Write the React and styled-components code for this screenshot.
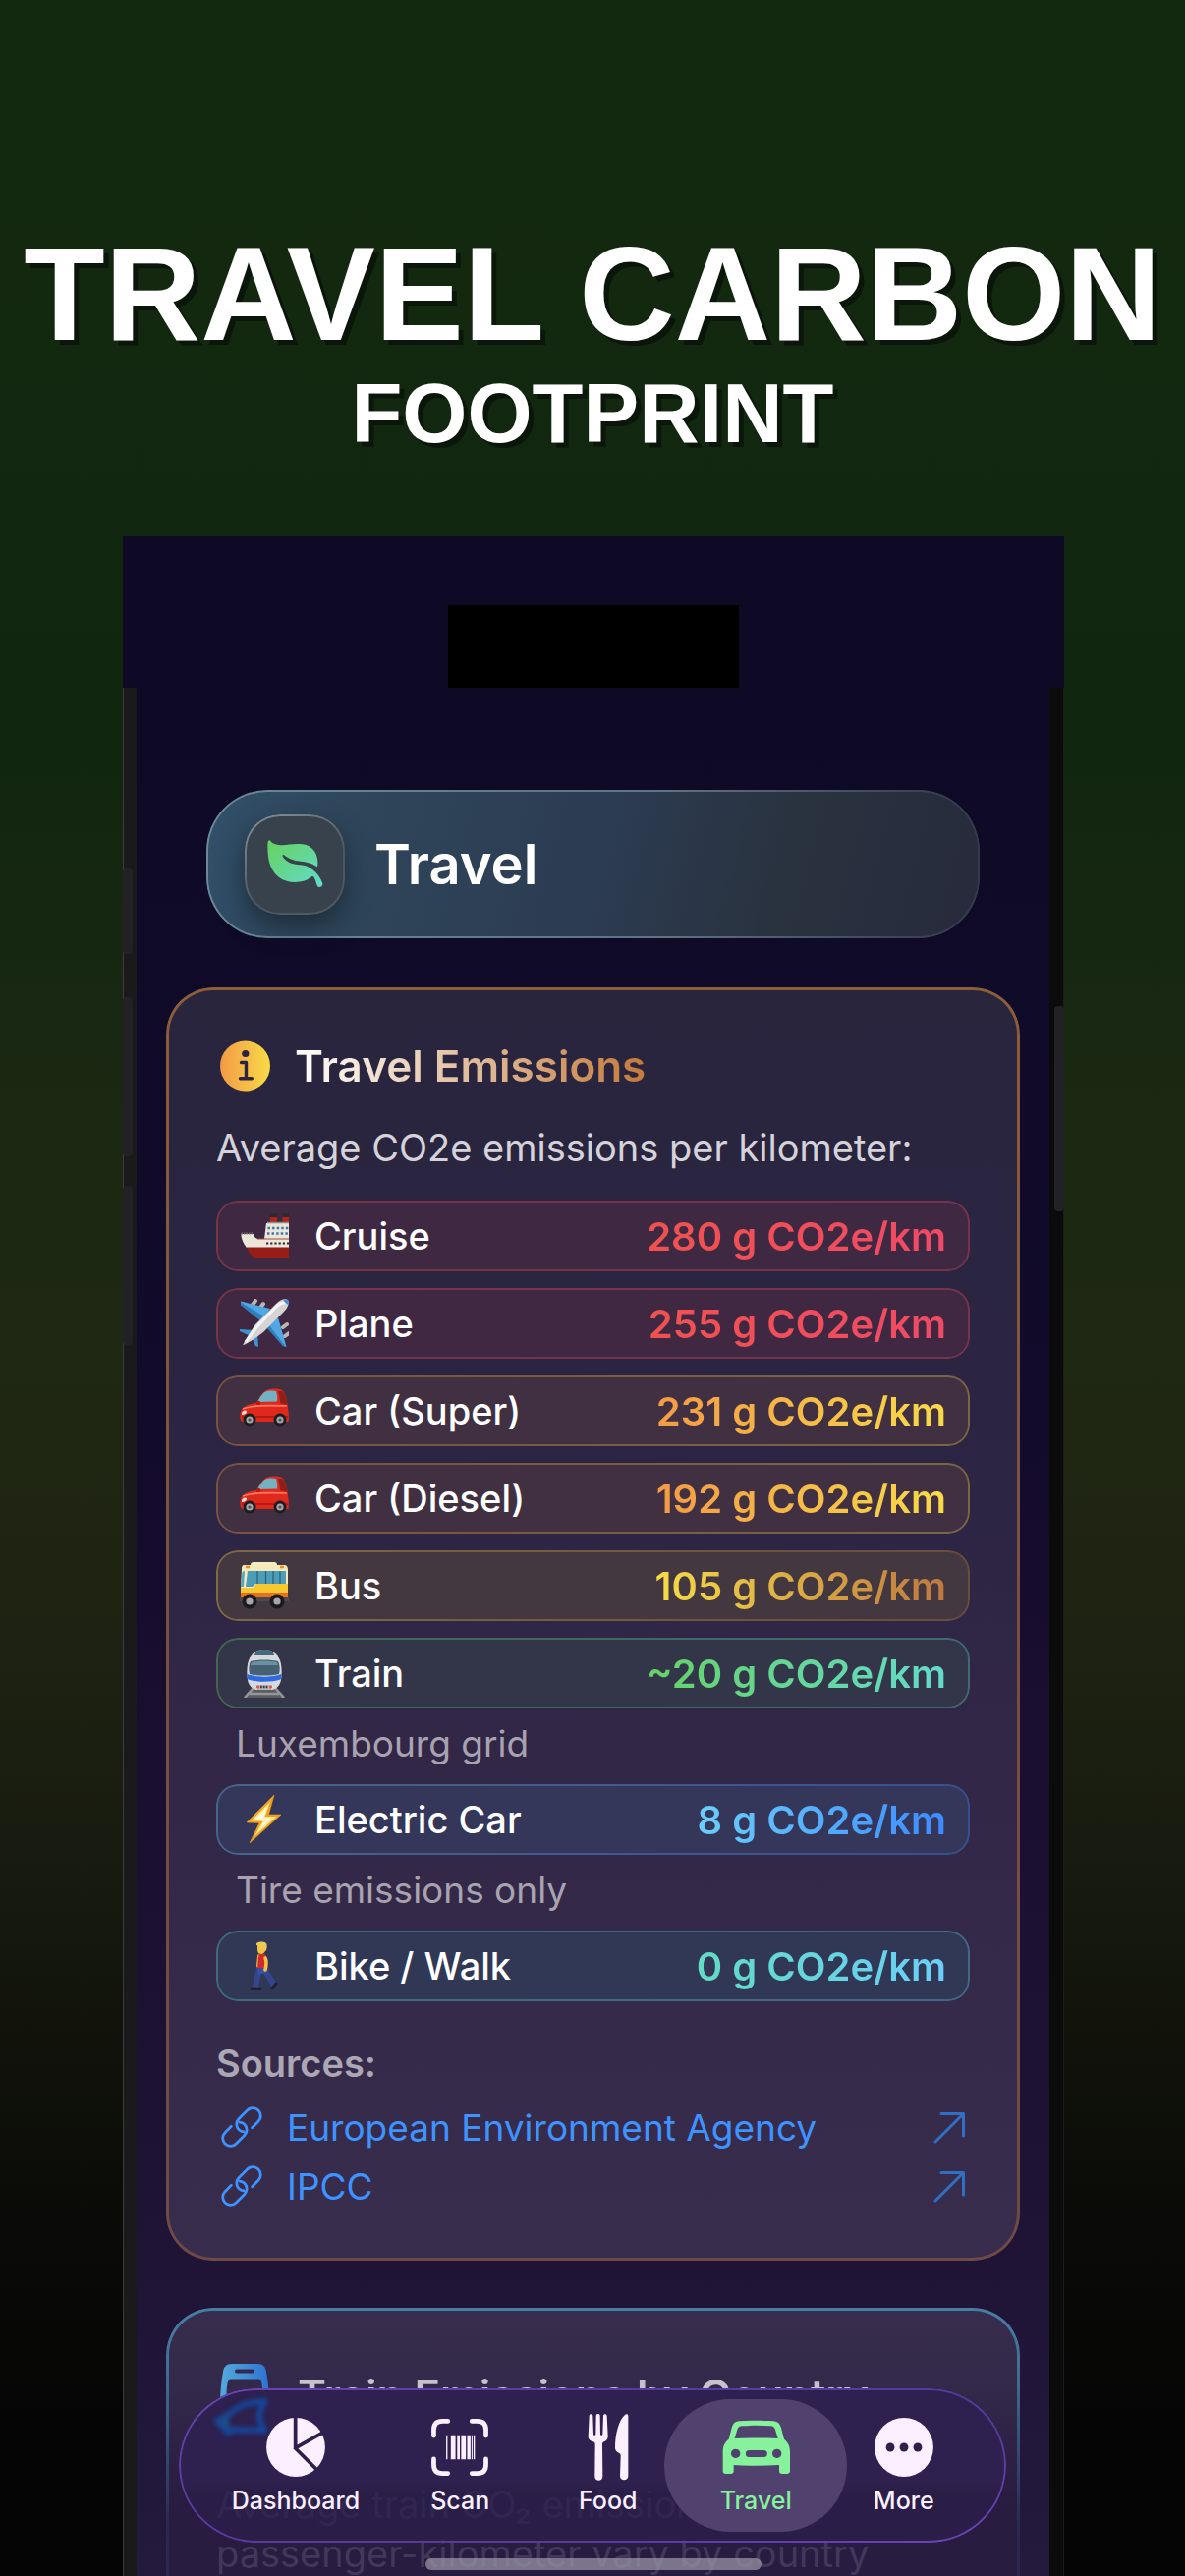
import React, { useState } from "react";
import styled, { createGlobalStyle, css } from "styled-components";

const GlobalStyle = createGlobalStyle`
  * {
    box-sizing: border-box;
  }
  body {
    margin: 0;
    background: #050505;
    font-family: Inter, "Liberation Sans", sans-serif;
    color: #ffffff;
  }
`;

// gradient outline, drawn inside the rounded box
const gradientBorder = (width, gradient) => css`
  position: relative;
  &::before {
    content: "";
    position: absolute;
    inset: 0;
    border-radius: inherit;
    padding: ${width}px;
    background: ${gradient};
    mask: linear-gradient(#000 0 0) content-box exclude, linear-gradient(#000 0 0);
    pointer-events: none;
  }
`;

const gradientText = css`
  background: linear-gradient(90deg, ${(p) => p.$from}, ${(p) => p.$to});
  background-clip: text;
  -webkit-background-clip: text;
  color: transparent;
`;

const Page = styled.main`
  height: 100vh;
  display: flex;
  flex-direction: column;
  overflow: hidden;
  background: linear-gradient(
    180deg,
    #13290f 0%,
    #12270f 20%,
    #10260f 28%,
    #1a2812 42%,
    #1f2812 53%,
    #1e2212 64%,
    #16190e 74%,
    #0b0c08 85%,
    #050505 94%
  );
`;

const Headline = styled.h1`
  margin: 0;
  padding: 226px 0 85px;
  display: flex;
  flex-direction: column;
  align-items: center;
  font-family: "Liberation Sans", Arial, sans-serif;
  font-weight: bold;
  white-space: nowrap;
  text-shadow: 5px 5px 0 #0a160a;
`;

const HeadlineTop = styled.span`
  font-size: 135px;
  line-height: 148px;
`;

const HeadlineBottom = styled.span`
  margin-top: 6px;
  font-size: 85px;
  line-height: 81px;
`;

const Phone = styled.div`
  margin: 0 123px 0 125px;
  flex: 1;
  min-height: 0;
  display: flex;
  flex-direction: column;
`;

const PhoneTop = styled.div`
  height: 154px;
  padding-top: 70px;
  display: flex;
  justify-content: center;
  background: #0e0a25;
`;

const Island = styled.div`
  width: 296px;
  height: 84px;
  background: #000000;
`;

const Bezel = styled.div`
  position: relative;
  flex: 1;
  min-height: 0;
  display: flex;
  padding: 0 14px 0 13px;
  background: linear-gradient(90deg, #1a1a1a, #0b0b0c);
  border-left: 1px solid #3c3c3e;
  border-right: 1px solid #1e1c20;
`;

const SideKey = styled.span`
  position: absolute;
  top: ${(p) => p.$top}px;
  ${(p) => p.$side}: -1px;
  width: 10px;
  height: ${(p) => p.$size}px;
  border-radius: 4px;
  background: #222125;
`;

const Screen = styled.div`
  position: relative;
  flex: 1;
  display: flex;
  flex-direction: column;
  overflow: hidden;
  padding: 104px 30px 0;
  background: linear-gradient(180deg, #0e0a25 0%, #120b2b 38%, #190d30 52%, #1f1436 84%, #241a3e 100%);
`;

const TitleBar = styled.header`
  flex: none;
  height: 151px;
  margin: 0 41px 50px;
  padding: 0 39px;
  display: flex;
  align-items: center;
  gap: 30px;
  border-radius: 62px;
  background: linear-gradient(105deg, #31506a 0%, #2f465b 18%, #2c3c52 50%, #29323f 74%, #272a3c 100%);
  ${gradientBorder(2, "linear-gradient(90deg, #6d8797, #5d7284 60%, #34384b)")}
`;

const LeafBadge = styled.div`
  width: 102px;
  height: 102px;
  display: grid;
  place-items: center;
  border-radius: 36px;
  background: #37424d;
  box-shadow: 0 12px 26px rgba(22, 36, 46, 0.7);
  ${gradientBorder(2, "linear-gradient(150deg, #8a949b, #4c5660 60%, #515b64)")}
`;

const ScreenTitle = styled.h2`
  margin: 0;
  font-size: 56px;
  font-weight: 600;
`;

const Card = styled.section`
  flex: none;
  margin-bottom: 48px;
  padding: 54px 51px 46px;
  border-radius: 48px;
  background: ${(p) => p.$fill};
  ${(p) => gradientBorder(3, p.$edge)}
`;

const CardHead = styled.div`
  display: flex;
  align-items: center;
  gap: 25px;
  padding-left: 4px;
  margin-bottom: 33px;

  svg {
    display: block;
  }
`;

const CardTitle = styled.h3`
  margin: 0;
  font-size: 44px;
  line-height: 52px;
  font-weight: 600;
  ${gradientText}
`;

const Lead = styled.p`
  margin: 0 0 30px;
  font-size: 38px;
  line-height: 48px;
  color: #d5d3d9;
`;

const CountryCard = styled(Card)`
  padding-top: 57px;

  ${CardHead} {
    gap: 29px;
    margin-bottom: 54px;
  }
`;

const Faded = styled(Lead)`
  line-height: 50px;
  color: #43385b;
`;

const EmissionList = styled.ul`
  margin: 0;
  padding: 0;
  list-style: none;
  display: flex;
  flex-direction: column;
  gap: 17px;
`;

const EmissionRow = styled.div`
  height: 72px;
  padding: 0 24px;
  display: flex;
  align-items: center;
  gap: 26px;
  border-radius: 22px;
  font-size: 38px;
  background: ${(p) => p.$fill};
  ${(p) => gradientBorder(2, `linear-gradient(90deg, ${p.$from}50, ${p.$to}50)`)}

  svg {
    flex: none;
    width: 50px;
    height: 50px;
  }
`;

const Mode = styled.span`
  flex: 1;
  font-weight: 500;
`;

const Amount = styled.strong`
  font-size: 40px;
  font-weight: 600;
  ${gradientText}
`;

const Note = styled.p`
  margin: 0;
  padding: 12px 0 0 20px;
  font-size: 37px;
  line-height: 48px;
  color: #a9a3b0;
`;

const SourcesTitle = styled.h4`
  margin: 39px 0 11px;
  font-size: 38px;
  line-height: 48px;
  font-weight: 600;
  color: #aca7b4;
`;

const SourceLink = styled.a`
  height: 60px;
  padding: 0 4px;
  display: flex;
  align-items: center;
  gap: 24px;
  font-size: 37px;
  color: #3e93ff;
  text-decoration: none;

  span {
    flex: 1;
  }
`;

const TabBar = styled.nav`
  position: absolute;
  left: 43px;
  right: 44px;
  bottom: 34px;
  height: 157px;
  padding: 0 29px 0 27px;
  display: grid;
  grid-template-columns: 11fr 9fr 9fr 9fr 9fr;
  border-radius: 79px;
  background: linear-gradient(180deg, #2e214f 0%, #2e214f 58%, rgba(43, 31, 76, 0.7) 68%, rgba(43, 31, 76, 0.75) 100%);

  &::before {
    content: "";
    position: absolute;
    inset: 0;
    border-radius: inherit;
    padding: 2px;
    background: linear-gradient(165deg, #6a45b8 0%, #5a3aa0 30%, #573a9e 70%, #6a45b8 100%);
    mask: linear-gradient(#000 0 0) content-box exclude, linear-gradient(#000 0 0);
    pointer-events: none;
  }
`;

const Tab = styled.button`
  position: relative;
  z-index: 1;
  margin: 11px 0;
  padding: 15px 0 0;
  display: flex;
  flex-direction: column;
  align-items: center;
  gap: 4px;
  border: 0;
  background: none;
  font-family: inherit;
  font-size: 25px;
  line-height: 32px;
  font-weight: 500;
  color: ${(p) => (p.$active ? "#86f29b" : "#faf0ff")};
  cursor: pointer;

  &::before {
    content: "";
    display: ${(p) => (p.$active ? "block" : "none")};
    position: absolute;
    inset: 0 -18px;
    z-index: -1;
    border-radius: 68px;
    background: #50416f;
  }

  svg {
    height: 68px;
  }
`;

const Refraction = styled.svg`
  position: absolute;
  left: 36px;
  top: 10px;
  filter: blur(2px);
`;

const HomeBar = styled.div`
  position: absolute;
  left: 50%;
  bottom: 6px;
  width: 342px;
  height: 12px;
  margin-left: -171px;
  border-radius: 6px;
  background: rgba(160, 154, 170, 0.7);
`;

const LeafIcon = () => (
  <svg width="57" height="49" viewBox="0 0 57 49">
    <defs>
      <linearGradient id="leaf" x1="0" y1="0" x2="1" y2="1">
        <stop offset="0" stopColor="#66d25f" />
        <stop offset="1" stopColor="#63dbcb" />
      </linearGradient>
    </defs>
    <path
      fill="url(#leaf)"
      d="M3 .7C5 3 8 5 14 5.2 20 5.4 24 4 31 4c7 0 11 1 15 5 4 4 6 10 5.300 16.500-.2 2.300-.6 1.900-1.900 1C45 23.300 40 22.300 34 21.700 26 20.900 22 19 17.500 15.500c-1.500-1.200-2.500 0-1.600 1.400C19.500 22.500 25 24.300 31 25c6 .7 10 1 15 5 5 3.800 8.500 9 10.300 14 1 3-3.600 5.600-5.300 2.800-1.400-3.200-1.800-7-3.800-9.400-1.100-1-1.900-.4-3 .7C40 41.500 35 43 28 43 16 43 8 36.500 4 28 .8 21 .3 13 .4 4 .4 1 2-.5 3 .7Z"
    />
  </svg>
);

const InfoIcon = () => (
  <svg width="51" height="52" viewBox="0 0 51 52">
    <defs>
      <linearGradient id="info">
        <stop offset="0" stopColor="#f39a46" />
        <stop offset="1" stopColor="#f8db48" />
      </linearGradient>
    </defs>
    <circle cx="25.500" cy="26" r="25.500" fill="url(#info)" />
    <circle cx="25.800" cy="13.500" r="3.600" fill="#2a2440" />
    <path d="M21.500 22.500h5v16M20.500 38.800h11.800" fill="none" stroke="#2a2440" strokeWidth="3.400" strokeLinecap="round" strokeLinejoin="round" />
  </svg>
);

const TramIcon = () => (
  <svg width="50" height="64" viewBox="0 0 50 64">
    <defs>
      <linearGradient id="tram">
        <stop offset="0" stopColor="#55aadb" />
        <stop offset="1" stopColor="#2d73d4" />
      </linearGradient>
    </defs>
    <path
      fill="url(#tram)"
      fillRule="evenodd"
      d="M12 0h26c6 0 8 3 9 8 2 11 3 22 3 34 0 7-3 10-9 10H9c-6 0-9-3-9-10C0 30 1 19 3 8 4 3 6 0 12 0Zm5 5.500a2 2 0 0 0 0 4h16a2 2 0 0 0 0-4Zm-6 10c-4 0-4 8-4.500 15h37c-.5-7-.5-15-4.500-15Z"
    />
  </svg>
);

const ChainIcon = () => (
  <svg width="44" height="44" viewBox="-22 -22 44 44" fill="none" stroke="currentColor" strokeWidth="2.800" strokeLinecap="round">
    <g transform="rotate(-45)">
      <path d="M-7-8h-9a8 8 0 0 0 0 16h12a8 8 0 0 0 8-8 8 8 0 0 0-2-5" />
      <path d="M7 8h9a8 8 0 0 0 0-16H4a8 8 0 0 0-8 8 8 8 0 0 0 2 5" />
    </g>
  </svg>
);

const ArrowIcon = () => (
  <svg width="33" height="33" viewBox="0 0 33 33" fill="none" stroke="#2f6fc4" strokeWidth="3" strokeLinecap="round" strokeLinejoin="round">
    <path d="M2 31 30 3M8 2.500h22.500V25" />
  </svg>
);

const ShipEmoji = () => (
  <svg viewBox="0 0 50 50">
    <path d="M31 2h7v10h-7zM43.500 2H50v10h-6.500z" fill="#b3241c" />
    <path d="M31 2h7v4h-7zM43.500 2H50v4h-6.500z" fill="#2b2a2c" />
    <path d="M27 12h23v16H25z" fill="#e9e6dc" />
    <path d="M28 11.500h22" stroke="#8f8c86" strokeWidth="1.500" />
    <path d="M28.500 17H50M28 22.500h22" stroke="#3f74a8" strokeWidth="2.400" strokeDasharray="2.400 2.200" />
    <path d="M1.500 23H14v2.500l4 2.500h32v9H7C4 33 2 29 1.500 25Z" fill="#ebe7da" />
    <path d="M1.500 22.500H14" stroke="#77736d" strokeWidth="2" strokeDasharray="1.500 1" />
    <path d="M18 28h32" stroke="#b0473c" strokeWidth="1" />
    <path d="M27 32.500h23" stroke="#262830" strokeWidth="2.200" strokeDasharray="2.200 2" />
    <path d="M7 36.500h43V47H16c-4 0-7-6-9-10.500Z" fill="#991d17" />
  </svg>
);

const PlaneEmoji = () => (
  <svg viewBox="0 0 50 50">
    <path d="M13 6l3-4M21 9l3-4M44 29l4-3M46 38l4-3" stroke="#b9b6b4" strokeWidth="4" strokeLinecap="round" />
    <path d="M1 2.500 31 10l-9 13L1 6ZM47.500 49 39 19 27 28l17 20Z" fill="#51a7e4" />
    <path d="M1 3.500 25 18l-3 5L1 6ZM46 48 30 27l-3 2 17 19Z" fill="#2f7fbd" />
    <path d="M0 31 16 32l-5 6L0 33ZM19 49 18 34l-6 5 4 9Z" fill="#3c93d2" />
    <path d="M49 1c2 3 0 8-4 12L24 34C18 39 10 44 4 47c-.5.3-1 0-.6-.6C6 41 12 32 16 26L37 5c4-4 9-6 12-4Z" fill="#d6d4d4" />
    <path d="M46 4C42 4 39 6 36 9L18 28C13 34 9 40 6 44" stroke="#f6f5f5" strokeWidth="3" fill="none" />
    <path d="M44 1.500c3-.8 5-.5 5.500 0 .5 1 .6 3 0 5Z" fill="#3c8fd0" />
  </svg>
);

const CarEmoji = () => (
  <svg viewBox="0 0 50 50">
    <path d="M17 17c4-7 7-12 11-13.500C32 2 40 2 43 4c4 3 5 9 6 18 1 5 1 10 .5 14H3C0 35 0 30 1 26c1-4 6-8 16-9Z" fill="#e0291c" />
    <path d="M43 5c4 3 5 8 5.500 14L41 17c0-5-1-8-2-12Z" fill="#8d1f18" />
    <path d="M18 16c3-6 6-10 10-11 4-.7 7-.5 9 .3 1 3 1.500 6 1 10.200Z" fill="#71b2c4" />
    <path d="M3 23c7-3 22-4 45-3" stroke="#ff7b62" strokeWidth="1.600" fill="none" />
    <path d="M2 31h47" stroke="#a9170f" strokeWidth="1.500" />
    <circle cx="19" cy="17" r="2.300" fill="#b31a12" />
    <path d="M2 27c2-3 5-3 5-1s-3 3-5 3Z" fill="#f4dcd2" />
    <circle cx="10" cy="34" r="6.500" fill="#1d1d20" />
    <circle cx="41" cy="34" r="6.500" fill="#1d1d20" />
    <circle cx="10" cy="34" r="3.600" fill="#a6a6aa" />
    <circle cx="41" cy="34" r="3.600" fill="#a6a6aa" />
    <circle cx="10" cy="34" r="1.600" fill="#4f4f54" />
    <circle cx="41" cy="34" r="1.600" fill="#4f4f54" />
  </svg>
);

const BusEmoji = () => (
  <svg viewBox="0 0 50 50">
    <rect x="11" y="1" width="27" height="6" rx="3" fill="#f6edc4" />
    <path d="M4 4h41c3 0 4 2 4 5v31H1V28L2 8c0-3 1-4 2-4Z" fill="#f5ebba" />
    <path d="M2.500 11 5 10l-1 16H1Z" fill="#55a6c3" />
    <path d="M8 10h39v13H16l-3 3H6Z" fill="#4d9db9" />
    <path d="M18 10v14M26.500 10v13M34 10v13M41 10v13" stroke="#2e5e74" strokeWidth="1.200" />
    <path d="M1 27h13l3-4h32v9H1Z" fill="#f7c82f" />
    <path d="M1 32h48v6H1Z" fill="#ea6f21" />
    <path d="M0 37h50v4H0Z" fill="#4a4a4e" />
    <path d="M6 6h4M41 6h4" stroke="#ee8a28" strokeWidth="2.600" />
    <circle cx="10" cy="41" r="7.500" fill="#1b1b1e" />
    <circle cx="38" cy="41" r="7.500" fill="#1b1b1e" />
    <circle cx="10" cy="41" r="3.600" fill="#a7a7aa" />
    <circle cx="38" cy="41" r="3.600" fill="#a7a7aa" />
  </svg>
);

const TrainEmoji = () => (
  <svg viewBox="0 0 50 50">
    <path d="M15 41h20l11 9H4Z" fill="#5b5b60" />
    <path d="m14 40-9 10M36 40l9 10M10 46h30" stroke="#95959a" strokeWidth="2.600" />
    <path d="M25 1c8 0 13 4 16 11 2 6 2 14 1 20-1 5-4 9-9 10H17c-5-1-8-5-9-10-1-6-1-14 1-20C12 5 17 1 25 1Z" fill="#d9d9dc" />
    <path d="M15 7c1-5 4-6 10-6s9 1 10 6Z" fill="#47677c" />
    <path d="M11 13c8-2 20-2 28 0 2 4 2 9 1 13-9 2-21 2-30 0-1-4-1-9 1-13Z" fill="#456173" />
    <path d="M12 14c8-2 18-2 26 0l1 3H11Z" fill="#6990a5" />
    <path d="M7.500 26c10 3.500 25 3.500 35 0 0 3-.4 4-1 5.500-9 3-24 3-33 0-.6-1.500-1-2.500-1-5.500Z" fill="#2b6ae0" />
    <path d="M17 37h16l-1 5H18Z" fill="#b9b9bd" />
    <path d="M21 39h8" stroke="#3b3b40" strokeWidth="2.400" strokeDasharray="1.800 1" />
    <circle cx="18.500" cy="39" r="1.500" fill="#e0533c" />
    <circle cx="31.500" cy="39" r="1.500" fill="#e0533c" />
  </svg>
);

const BoltEmoji = () => (
  <svg viewBox="0 0 50 50">
    <path d="M35 0 7 28l13 .5L10 49l32-29H29.500Z" fill="#f2a024" stroke="#f2a024" strokeWidth=".6" />
    <path d="M31 7 11.500 26.300l12 .4L15 42l22.500-20H25.600Z" fill="#fdea83" />
    <path d="M28 12 16 24.500l10 .7L19 37l13-13.500h-8Z" fill="#fffbe2" />
  </svg>
);

const WalkEmoji = () => (
  <svg viewBox="0 0 50 50">
    <path d="M20 27 16 46M25 28c3 7 7 10 10 17" stroke="#344590" strokeWidth="6" />
    <path d="M18 25h10l1 6-10 3Z" fill="#3b4ea0" />
    <path d="M12 48.500h9M33 48l4-5" stroke="#1f2130" strokeWidth="3" strokeLinecap="round" />
    <path d="m20 15-1 10" stroke="#f0b93f" strokeWidth="4" strokeLinecap="round" />
    <path d="M20 13c3-1 6-1 7 2l2 12H18c1-5 0-10 2-14Z" fill="#cf2a30" />
    <path d="M26 17c2 4 1 7 0 12" stroke="#f3c044" strokeWidth="3.600" strokeLinecap="round" fill="none" />
    <path d="M18 2c4-2 9-1 9 3 0 4-2 8-5 8-4 0-4-4-4-6Z" fill="#f5c443" />
    <path d="M17 2c4-2 9-2 10.500 1 .6 3 0 6-1.500 7-1-3-2-6-9-6Z" fill="#ecc75a" />
  </svg>
);

const PieIcon = () => (
  <svg width="60" viewBox="0 0 176 200">
    <circle cx="88" cy="100" r="88" fill="currentColor" />
    <path d="M87 8v96M85 103l86-48M84 100l70 70" stroke="#2d204d" strokeWidth="11" fill="none" />
  </svg>
);

const ScanIcon = () => (
  <svg width="60" viewBox="0 0 176 200">
    <g fill="none" stroke="currentColor" strokeWidth="14" strokeLinecap="round">
      <path d="M10 65V48q0-26 26-26h16M124 22h16q26 0 26 26v17M166 135v17q0 26-26 26h-16M52 178H36q-26 0-26-26v-17" />
    </g>
    <g fill="currentColor">
      <path d="M47 64h4v72h-4zM61 64h14v72H61zM80 64h8v72h-8zM92 64h14v72H92zM110 64h10v72h-10zM123 64h3v72h-3zM129 64h4v72h-4z" />
    </g>
  </svg>
);

const FoodIcon = () => (
  <svg width="42" viewBox="0 0 122 204">
    <g fill="currentColor">
      <path d="M3 6c0-7 11-7 11 0l2 56c0 4 7 4 7 0l1-56c0-8 12-8 12 0l1 56c0 4 7 4 7 0l2-56c0-7 11-7 11 0l3 62c0 10-5 13-12 17-3 2-5 4-5 8l1 98c0 16-24 16-24 0l1-98c0-4-2-6-5-8C5 81 0 78 0 68Z" />
      <path d="M113 2c4-3 9-1 9 4v184c0 16-25 16-25 0l2-62c0-4-1-6-4-8-9-5-13-9-13-16 0-44 12-87 31-102Z" />
    </g>
  </svg>
);

const CarIcon = () => (
  <svg width="69" viewBox="0 -12 207 188">
    <path
      fill="currentColor"
      fillRule="evenodd"
      d="M52 2C90-.5 117-.5 156 2c14 1 20 9 24 21l9 34c13 11 18 21 18 40v57c0 6-4 9-9 9h-15c-6 0-9-3-9-9v-18c-48 3-94 3-139 0v18c0 6-3 9-9 9H11c-6 0-9-3-9-9V97c0-19 5-29 18-40l9-34C33 11 38 3 52 2ZM58 17c-7 1-10 5-12 11l-8 27c44-2 88-2 132 0l-8-27c-2-6-5-10-12-11-30-2-62-2-92 0ZM41 87a14 14 0 1 0 .01 0ZM167 87a14 14 0 1 0 .01 0ZM82 91a10 10 0 0 0 0 21h45a10 10 0 0 0 0-21Z"
    />
  </svg>
);

const MoreIcon = () => (
  <svg width="60" viewBox="0 0 176 200">
    <circle cx="88" cy="100" r="88" fill="currentColor" />
    <g fill="#2d204d">
      <circle cx="47" cy="100" r="13" />
      <circle cx="88" cy="100" r="13" />
      <circle cx="129" cy="100" r="13" />
    </g>
  </svg>
);

const EMISSIONS = [
  { mode: "Cruise", amount: "280", icon: ShipEmoji, fill: "#3f2842", from: "#f0524f", to: "#f04a66" },
  { mode: "Plane", amount: "255", icon: PlaneEmoji, fill: "#402843", from: "#f0524f", to: "#f04a66" },
  { mode: "Car (Super)", amount: "231", icon: CarEmoji, fill: "#403041", from: "#f39a46", to: "#f8db48" },
  { mode: "Car (Diesel)", amount: "192", icon: CarEmoji, fill: "#413041", from: "#f39a46", to: "#f8db48" },
  { mode: "Bus", amount: "105", icon: BusEmoji, fill: "#433740", from: "#f8db48", to: "#bd7840" },
  { mode: "Train", amount: "~20", icon: TrainEmoji, fill: "#333548", from: "#66d266", to: "#63dbcb", note: "Luxembourg grid" },
  { mode: "Electric Car", amount: "8", icon: BoltEmoji, fill: "#343759", from: "#6bcffa", to: "#3d8bff", note: "Tire emissions only" },
  { mode: "Bike / Walk", amount: "0", icon: WalkEmoji, fill: "#303855", from: "#63dbc4", to: "#6bcffa" },
];

const SOURCES = [
  { name: "European Environment Agency", href: "https://www.eea.europa.eu" },
  { name: "IPCC", href: "https://www.ipcc.ch" },
];

const TABS = [
  { name: "Dashboard", icon: PieIcon },
  { name: "Scan", icon: ScanIcon },
  { name: "Food", icon: FoodIcon },
  { name: "Travel", icon: CarIcon },
  { name: "More", icon: MoreIcon },
];

const App = () => {
  const [tab, setTab] = useState("Travel");

  return (
    <>
      <GlobalStyle />
      <Page>
        <Headline>
          <HeadlineTop>TRAVEL CARBON</HeadlineTop>
          <HeadlineBottom>FOOTPRINT</HeadlineBottom>
        </Headline>
        <Phone>
          <PhoneTop>
            <Island />
          </PhoneTop>
          <Bezel>
            <SideKey $side="left" $top={184} $size={87} />
            <SideKey $side="left" $top={315} $size={162} />
            <SideKey $side="left" $top={507} $size={162} />
            <SideKey $side="right" $top={324} $size={209} />
            <Screen>
              <TitleBar>
                <LeafBadge>
                  <LeafIcon />
                </LeafBadge>
                <ScreenTitle>Travel</ScreenTitle>
              </TitleBar>

              <Card
                $fill="linear-gradient(180deg, #29253d 0%, #2b2543 35%, #312646 55%, #382d4c 100%)"
                $edge="linear-gradient(180deg, #8d5d39, #7a4f41 50%, #6d4a46)"
              >
                <CardHead>
                  <InfoIcon />
                  <CardTitle $from="#ffffff" $to="#c47a3a">
                    Travel Emissions
                  </CardTitle>
                </CardHead>
                <Lead>Average CO2e emissions per kilometer:</Lead>
                <EmissionList>
                  {EMISSIONS.map(({ mode, amount, icon: Icon, fill, from, to, note }) => (
                    <li key={mode}>
                      <EmissionRow $fill={fill} $from={from} $to={to}>
                        <Icon />
                        <Mode>{mode}</Mode>
                        <Amount $from={from} $to={to}>
                          {amount} g CO2e/km
                        </Amount>
                      </EmissionRow>
                      {note && <Note>{note}</Note>}
                    </li>
                  ))}
                </EmissionList>
                <SourcesTitle>Sources:</SourcesTitle>
                {SOURCES.map((source) => (
                  <SourceLink key={source.name} href={source.href}>
                    <ChainIcon />
                    <span>{source.name}</span>
                    <ArrowIcon />
                  </SourceLink>
                ))}
              </Card>

              <CountryCard
                $fill="linear-gradient(180deg, #382d4c 0, #33294a 80px, #281c40 200px, #281c40 100%)"
                $edge="linear-gradient(180deg, #467fa6 0, #3d6a90 80px, #2a2850 220px)"
              >
                <CardHead>
                  <TramIcon />
                  <CardTitle $from="#c6c1cd" $to="#c6c1cd">
                    Train Emissions by Country
                  </CardTitle>
                </CardHead>
                <Faded>
                  Average train CO₂ emissions per
                  <br />
                  passenger-kilometer vary by country
                </Faded>
              </CountryCard>

              <TabBar>
                <Refraction width="58" height="40" viewBox="0 0 58 40">
                  <path d="M54 3C36 4 24 7 16 16L3 23l11 12 6-3 34 1M52 4c-8 10-8 18 0 30" fill="none" stroke="#15459a" strokeWidth="6" />
                  <path d="m2 24 12-9 3 18Z" fill="#1d4c88" />
                </Refraction>
                {TABS.map(({ name, icon: Icon }) => (
                  <Tab key={name} type="button" $active={tab === name} onClick={() => setTab(name)}>
                    <Icon />
                    {name}
                  </Tab>
                ))}
              </TabBar>
              <HomeBar />
            </Screen>
          </Bezel>
        </Phone>
      </Page>
    </>
  );
};

export default App;
